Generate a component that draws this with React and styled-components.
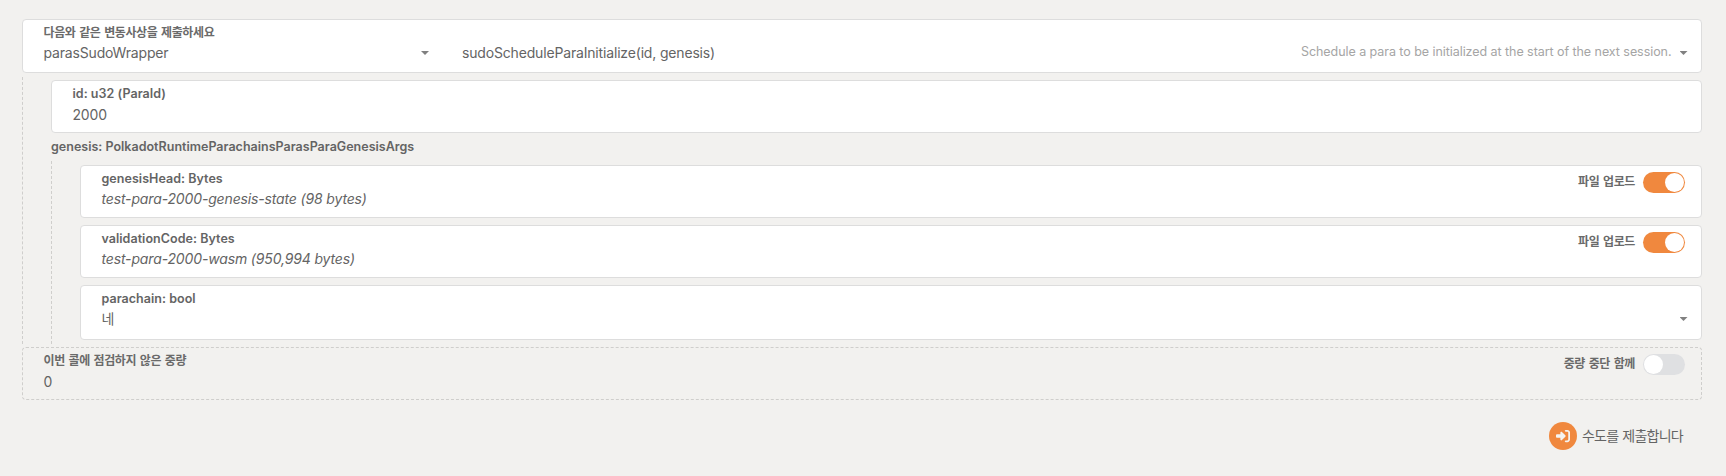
import React from 'react';
import styled, { createGlobalStyle, css } from 'styled-components';
import { FaRightToBracket } from 'react-icons/fa6';

const GlobalStyle = createGlobalStyle`
  * { box-sizing: border-box; }
  body {
    margin: 0;
    background: #f2f1ef;
    color: #646464;
    font-family: Inter, "Noto Sans CJK KR", sans-serif;
    font-size: 14px;
  }
`;

const Page = styled.main`
  height: 476px;
  padding: 19px 24px 0 22px;
  display: flex;
  flex-direction: column;
`;

const Field = styled.section`
  height: ${(p) => p.$height || 53}px;
  flex: none;
  display: flex;
  justify-content: space-between;
  padding: 4px 16px 0 20.5px;
  border: 1px ${(p) => (p.$dashed ? 'dashed #cfcecc' : 'solid #dddddd')};
  border-radius: 4px;
  background: ${(p) => (p.$dashed ? 'transparent' : '#fff')};
`;

const Column = styled.div`
  display: flex;
  flex-direction: column;
  width: ${(p) => (p.$width ? `${p.$width}px` : 'auto')};
  flex: ${(p) => (p.$grow ? 1 : 'none')};
`;

const korean = css`
  font-family: "Noto Sans CJK KR", sans-serif;
  font-size: 12px;
  color: #6a6a6a;
  letter-spacing: -0.4px;
  word-spacing: 1.4px;
  line-height: 15px;
`;

const Label = styled.label`
  height: 17px;
  line-height: 17px;
  font-size: 12.5px;
  font-weight: 600;
  letter-spacing: 0.04px;
  white-space: nowrap;
  ${(p) => p.$korean && korean}
`;

const SwitchLabel = styled(Label)`
  line-height: 21px;
`;

const GroupLabel = styled(Label)`
  margin: 5px 0 9px;
  letter-spacing: 0.01px;
`;

const Line = styled.div`
  display: flex;
  align-items: center;
  height: 24px;
  margin-top: ${(p) => p.$drop || 0}px;
`;

const Value = styled.span`
  line-height: 24px;
  font-size: 14px;
  letter-spacing: ${(p) => (p.$italic ? -0.15 : -0.17)}px;
  font-style: ${(p) => (p.$italic ? 'italic' : 'normal')};
  white-space: nowrap;
`;

const Hint = styled.span`
  margin: -2px 8px 0 auto;
  font-size: 12.5px;
  line-height: 22px;
  letter-spacing: -0.056px;
  color: #a5a5a5;
`;

const Caret = styled.span`
  width: 8px;
  height: 4px;
  margin-right: -2.5px;
  margin-left: ${(p) => (p.$push ? 'auto' : 0)};
  background: #808080;
  clip-path: polygon(0 0, 100% 0, 50% 100%);
`;

const Nest = styled.div`
  display: flex;
  flex-direction: column;
  margin-top: ${(p) => p.$top || 0}px;
  margin-bottom: ${(p) => p.$bottom || 0}px;
  padding: ${(p) => p.$inset || 0}px 0 ${(p) => p.$tail || 0}px 28px;
  border-left: 1px dashed #cfcecc;
`;

const Stack = styled.div`
  display: flex;
  flex-direction: column;
  gap: 7px;
`;

const Toggle = styled.div`
  display: flex;
  align-items: flex-start;
  gap: 8px;
`;

const Track = styled.span`
  display: flex;
  justify-content: ${(p) => (p.$on ? 'flex-end' : 'flex-start')};
  width: 42px;
  height: 21px;
  margin-top: 2px;
  padding: 1px;
  border-radius: 11px;
  background: ${(p) => (p.$on ? '#f0883e' : '#dfe0e2')};
`;

const Thumb = styled.span`
  width: 19px;
  height: 19px;
  border-radius: 50%;
  background: #fff;
`;

const Actions = styled.footer`
  display: flex;
  justify-content: flex-end;
  padding: 22px 19px 0 0;
`;

const Submit = styled.button`
  display: flex;
  align-items: center;
  gap: 5px;
  padding: 0;
  border: 0;
  background: none;
  color: #646464;
  font-family: "Noto Sans CJK KR", sans-serif;
  font-size: 14px;
  letter-spacing: -0.75px;
  word-spacing: 1.6px;
  line-height: 26px;
`;

const SubmitText = styled.span`
  padding-bottom: 2px;
`;

const IconDisc = styled.span`
  display: flex;
  align-items: center;
  justify-content: center;
  width: 28px;
  height: 28px;
  border-radius: 50%;
  background: #f0883e;
  color: #f5f4f2;
  font-size: 14px;
`;

const Switch = ({ label, on }) => (
  <Toggle>
    <SwitchLabel $korean>{label}</SwitchLabel>
    <Track $on={on}><Thumb /></Track>
  </Toggle>
);

const Param = ({ label, korean: isKorean, value, italic, children, ...box }) => (
  <Field {...box}>
    <Column>
      <Label $korean={isKorean}>{label}</Label>
      <Line $drop={italic ? 0 : 1}><Value $italic={italic}>{value}</Value></Line>
    </Column>
    {children}
  </Field>
);

export default function App() {
  return (
    <>
      <GlobalStyle />
      <Page>
        <Field $height={54}>
          <Column $width={418.5}>
            <Label $korean>다음와 같은 변동사상을 제출하세요</Label>
            <Line>
              <Column $width={377.5}><Value>parasSudoWrapper</Value></Column>
              <Caret />
            </Line>
          </Column>
          <Column $grow>
            <Label />
            <Line>
              <Value>sudoScheduleParaInitialize(id, genesis)</Value>
              <Hint>Schedule a para to be initialized at the start of the next session.</Hint>
              <Caret />
            </Line>
          </Column>
        </Field>
        <Nest $top={4} $inset={3} $bottom={3}>
          <Param label="id: u32 (ParaId)" value="2000" />
          <GroupLabel>genesis: PolkadotRuntimeParachainsParasParaGenesisArgs</GroupLabel>
          <Nest $top={-3} $inset={4} $tail={4}>
            <Stack>
              <Param label="genesisHead: Bytes" value="test-para-2000-genesis-state (98 bytes)" italic>
                <Switch label="파일 업로드" on />
              </Param>
              <Param label="validationCode: Bytes" value="test-para-2000-wasm (950,994 bytes)" italic>
                <Switch label="파일 업로드" on />
              </Param>
              <Field $height={55}>
                <Column $grow>
                  <Label>parachain: bool</Label>
                  <Line><Value>네</Value><Caret $push /></Line>
                </Column>
              </Field>
            </Stack>
          </Nest>
        </Nest>
        <Param $dashed korean label="이번 콜에 점검하지 않은 중량" value="0">
          <Switch label="중량 중단 함께" />
        </Param>
        <Actions>
          <Submit type="button">
            <IconDisc><FaRightToBracket /></IconDisc>
            <SubmitText>수도를 제출합니다</SubmitText>
          </Submit>
        </Actions>
      </Page>
    </>
  );
}
